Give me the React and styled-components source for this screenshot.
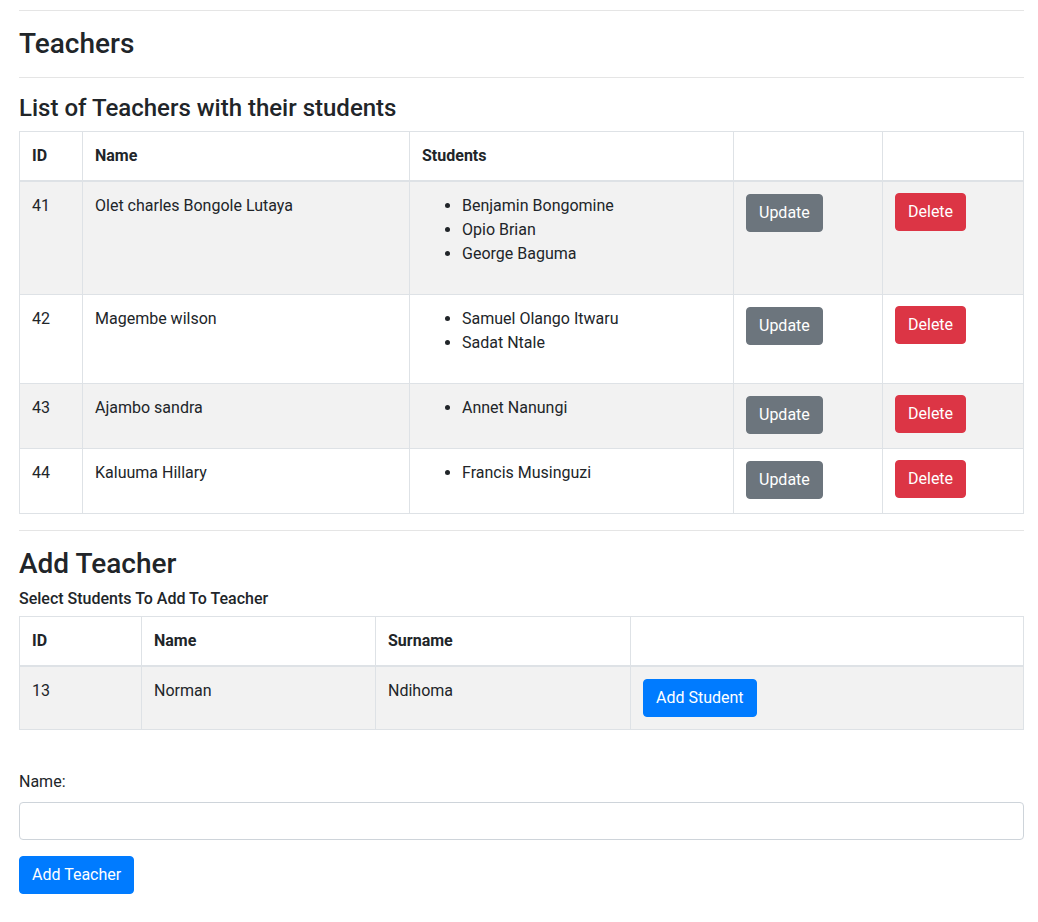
import React from "react";
import styled, { createGlobalStyle } from "styled-components";

const GlobalStyle = createGlobalStyle`
  * {
    box-sizing: border-box;
  }
  body {
    margin: 0;
    font-family: Roboto, "Liberation Sans", sans-serif;
    font-size: 16px;
    line-height: 1.5;
    color: #212529;
    background: #fff;
  }
`;

const Page = styled.div`
  padding: 10px 14px 20px 19px;
`;

const Rule = styled.hr`
  margin: ${props => (props.first ? "0" : "16px")} 0 16px;
  border: 0;
  border-top: 1px solid rgba(0, 0, 0, 0.1);
`;

const Title = styled.h3`
  margin: 0 0 8px;
  font-size: 28px;
  font-weight: 500;
  line-height: 1.2;
`;

const Subtitle = styled.h4`
  margin: 0 0 9px;
  font-size: 24px;
  font-weight: 500;
  line-height: 1.2;
`;

const Caption = styled.h6`
  margin: 0 0 8px;
  font-size: 16px;
  font-weight: 500;
  line-height: 1.2;
`;

const Table = styled.table`
  width: 100%;
  margin-bottom: 16px;
  border-collapse: collapse;
  table-layout: fixed;
  border: 1px solid #dee2e6;
`;

const Th = styled.th`
  padding: 12px;
  text-align: left;
  vertical-align: bottom;
  font-weight: 700;
  border: 1px solid #dee2e6;
  border-bottom-width: 2px;
`;

const Row = styled.tr`
  background: ${props => (props.striped ? "rgba(0, 0, 0, 0.05)" : "transparent")};
`;

const Td = styled.td`
  padding: 12px;
  vertical-align: top;
  border: 1px solid #dee2e6;
`;

const StudentList = styled.ul`
  margin: 0 0 16px;
  padding-left: 40px;
`;

const colors = {
  primary: "#007bff",
  secondary: "#6c757d",
  danger: "#dc3545"
};

const Button = styled.button`
  display: inline-block;
  padding: 6px 12px;
  font-family: inherit;
  font-size: 16px;
  line-height: 1.5;
  color: #fff;
  background: ${props => colors[props.variant]};
  border: 1px solid ${props => colors[props.variant]};
  border-radius: 4px;
  margin-top: ${props => (props.lift ? "-1px" : "0")};
  vertical-align: top;
  cursor: pointer;
`;

const Form = styled.form`
  padding-top: 24px;
`;

const Label = styled.label`
  display: inline-block;
  margin-bottom: 8px;
`;

const Input = styled.input`
  display: block;
  width: 100%;
  height: 38px;
  padding: 6px 12px;
  margin-bottom: 16px;
  font-family: inherit;
  font-size: 16px;
  color: #495057;
  border: 1px solid #ced4da;
  border-radius: 4px;
`;

const teachers = [
  {
    id: 41,
    name: "Olet charles Bongole Lutaya",
    students: ["Benjamin Bongomine", "Opio Brian", "George Baguma"]
  },
  { id: 42, name: "Magembe wilson", students: ["Samuel Olango Itwaru", "Sadat Ntale"] },
  { id: 43, name: "Ajambo sandra", students: ["Annet Nanungi"] },
  { id: 44, name: "Kaluuma Hillary", students: ["Francis Musinguzi"] }
];

const available = [{ id: 13, name: "Norman", surname: "Ndihoma" }];

const App = () => (
  <Page>
    <GlobalStyle />
    <Rule first />
    <Title>Teachers</Title>
    <Rule />
    <Subtitle>List of Teachers with their students</Subtitle>
    <Table>
      <colgroup>
        <col style={{ width: 63 }} />
        <col style={{ width: 327 }} />
        <col style={{ width: 324 }} />
        <col style={{ width: 149 }} />
        <col />
      </colgroup>
      <thead>
        <tr>
          <Th>ID</Th>
          <Th>Name</Th>
          <Th>Students</Th>
          <Th />
          <Th />
        </tr>
      </thead>
      <tbody>
        {teachers.map((t, i) => (
          <Row key={t.id} striped={i % 2 === 0}>
            <Td>{t.id}</Td>
            <Td>{t.name}</Td>
            <Td>
              <StudentList>
                {t.students.map(s => (
                  <li key={s}>{s}</li>
                ))}
              </StudentList>
            </Td>
            <Td>
              <Button type="button" variant="secondary">
                Update
              </Button>
            </Td>
            <Td>
              <Button type="button" variant="danger" lift>
                Delete
              </Button>
            </Td>
          </Row>
        ))}
      </tbody>
    </Table>
    <Rule />
    <Title>Add Teacher</Title>
    <Caption>Select Students To Add To Teacher</Caption>
    <Table>
      <colgroup>
        <col style={{ width: 122 }} />
        <col style={{ width: 234 }} />
        <col style={{ width: 255 }} />
        <col />
      </colgroup>
      <thead>
        <tr>
          <Th>ID</Th>
          <Th>Name</Th>
          <Th>Surname</Th>
          <Th />
        </tr>
      </thead>
      <tbody>
        {available.map((s, i) => (
          <Row key={s.id} striped={i % 2 === 0}>
            <Td>{s.id}</Td>
            <Td>{s.name}</Td>
            <Td>{s.surname}</Td>
            <Td>
              <Button type="button" variant="primary">
                Add Student
              </Button>
            </Td>
          </Row>
        ))}
      </tbody>
    </Table>
    <Form onSubmit={e => e.preventDefault()}>
      <Label htmlFor="teacher-name">Name:</Label>
      <Input id="teacher-name" type="text" />
      <Button type="submit" variant="primary">
        Add Teacher
      </Button>
    </Form>
  </Page>
);

export default App;
